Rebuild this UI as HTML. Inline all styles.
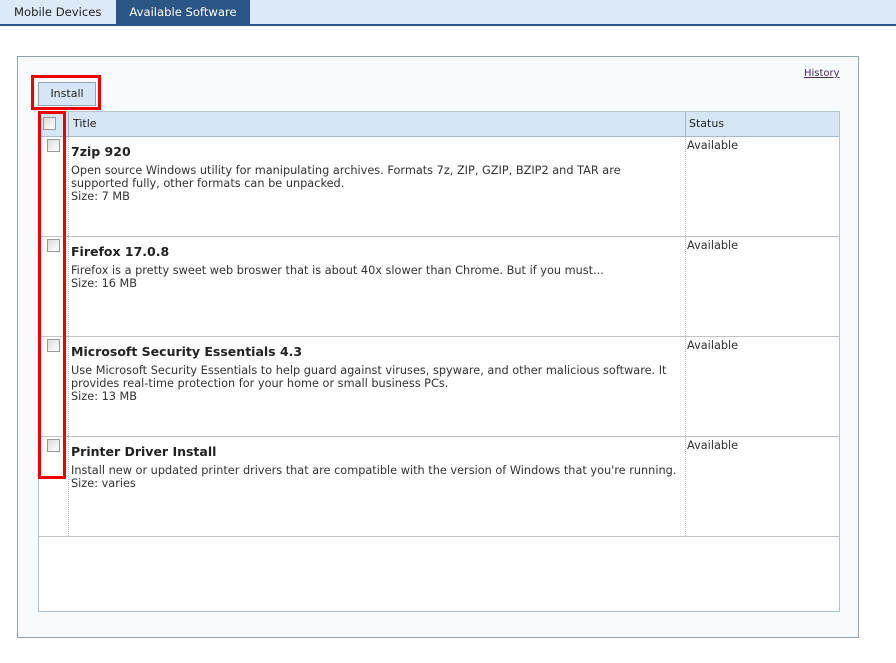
<!DOCTYPE html>
<html><head><style>
body{margin:0;width:896px;height:663px;background:#fff;font-family:"DejaVu Sans",Verdana,sans-serif;position:relative;overflow:hidden;color:#333}
.bar{position:absolute;left:0;top:0;width:896px;height:24px;background:#dce9f6;border-bottom:2px solid #2b5585}
.tab{position:absolute;top:0;height:24px;line-height:24px;font-size:11.6px;font-family:"DejaVu Sans",sans-serif}
.panel{position:absolute;left:17px;top:56px;width:840px;height:580px;border:1px solid #8fa3b3;background:#f7fbfe}
.a{position:absolute}
.cb{position:absolute;width:11px;height:11px;border:1px solid #999;background:linear-gradient(135deg,#ddd,#fff)}
.t{position:absolute;left:71px;font-size:12.5px;font-weight:bold;color:#222}
.d{position:absolute;left:71px;font-size:11.3px;line-height:13px;color:#333;width:614px}
.s{position:absolute;left:687px;font-size:11.3px;color:#333}
.hl{position:absolute;left:39px;width:800px;height:1px;background:#c4c4c4}
</style></head><body>
<div class="bar"></div>
<div class="tab" style="left:14px;color:#222">Mobile Devices</div>
<div class="tab" style="left:116px;width:134px;background:#2b5585;color:#fff;text-align:center">Available Software</div>
<div class="panel"></div>
<div class="a" style="left:804px;top:68px;font-size:10px;color:#4a2a5a;text-decoration:underline">History</div>
<div class="a" style="left:31px;top:75px;width:64px;height:29px;border:3px solid #e00"></div>
<div class="a" style="left:38px;top:82px;width:56px;height:22px;border:1px solid #8fa3b3;background:#d6e6f6;font-size:11px;line-height:22px;text-align:center;color:#222">Install</div>
<div class="a" style="left:38px;top:111px;width:800px;height:499px;border:1px solid #b8c4cc;background:#fff"></div>
<div class="a" style="left:39px;top:112px;width:800px;height:24px;background:#d6e6f6;border-bottom:1px solid #a8b8c8"></div>
<div class="a" style="left:68px;top:112px;width:1px;height:24px;background:#a8b8c8"></div>
<div class="a" style="left:685px;top:112px;width:1px;height:24px;background:#a8b8c8"></div>
<div class="a" style="left:73px;top:117px;font-size:11px;color:#222">Title</div>
<div class="a" style="left:689px;top:117px;font-size:11px;color:#222">Status</div>
<div class="a" style="left:68px;top:137px;height:399px;border-left:1px dotted #bbb"></div>
<div class="a" style="left:685px;top:137px;height:399px;border-left:1px dotted #bbb"></div>
<div class="hl" style="top:236px"></div><div class="hl" style="top:336px"></div><div class="hl" style="top:436px"></div><div class="hl" style="top:536px"></div>
<div class="cb" style="left:43px;top:117px"></div>
<div class="cb" style="left:47px;top:139px"></div>
<div class="cb" style="left:47px;top:239px"></div>
<div class="cb" style="left:47px;top:339px"></div>
<div class="cb" style="left:47px;top:439px"></div>
<div class="a" style="left:38px;top:111px;width:22px;height:362px;border:3px solid #e00"></div>
<div class="t" style="top:144px">7zip 920</div>
<div class="d" style="top:164px;width:580px">Open source Windows utility for manipulating archives. Formats 7z, ZIP, GZIP, BZIP2 and TAR are supported fully, other formats can be unpacked.<br>Size: 7 MB</div>
<div class="s" style="top:139px">Available</div>
<div class="t" style="top:244px">Firefox 17.0.8</div>
<div class="d" style="top:264px">Firefox is a pretty sweet web broswer that is about 40x slower than Chrome. But if you must...<br>Size: 16 MB</div>
<div class="s" style="top:239px">Available</div>
<div class="t" style="top:344px">Microsoft Security Essentials 4.3</div>
<div class="d" style="top:364px">Use Microsoft Security Essentials to help guard against viruses, spyware, and other malicious software. It provides real-time protection for your home or small business PCs.<br>Size: 13 MB</div>
<div class="s" style="top:339px">Available</div>
<div class="t" style="top:444px">Printer Driver Install</div>
<div class="d" style="top:464px;width:640px">Install new or updated printer drivers that are compatible with the version of Windows that you're running.<br>Size: varies</div>
<div class="s" style="top:439px">Available</div>
</body></html>
